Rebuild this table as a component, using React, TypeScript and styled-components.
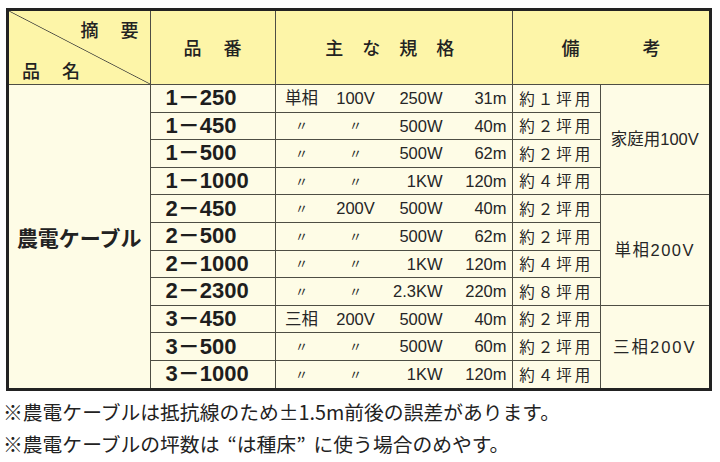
import React from "react";
import styled, { createGlobalStyle } from "styled-components";

const GlobalStyle = createGlobalStyle`
  html, body {
    margin: 0;
    padding: 0;
    background: #ffffff;
  }
  body {
    font-family: "Liberation Sans", "Noto Sans CJK JP", sans-serif;
    color: #262626;
  }
`;

const Page = styled.div`
  width: 720px;
  height: 462px;
  overflow: hidden;
`;

const Frame = styled.div`
  margin: 8px 0 0 6px;
  width: 706px;
  box-sizing: border-box;
  border: 3px solid #222;
`;

const Table = styled.table`
  width: 100%;
  border-collapse: collapse;
  border-style: hidden;
  table-layout: fixed;
`;

const HeadRow = styled.tr`
  height: 73px;
  background: #fdf5a8;
`;

const BodyRow = styled.tr`
  height: 27.6px;
  background: #fefce6;
`;

const Th = styled.th`
  border: 1px solid #4e4e44;
  padding: 0;
  font-family: "Noto Sans CJK JP", sans-serif;
  font-weight: 500;
  font-size: 18px;
  color: #222;
  text-align: center;
  vertical-align: middle;
`;

const CornerTh = styled(Th)`
  background: linear-gradient(
    to top right,
    transparent calc(50% - 0.8px),
    #4e4e44 50%,
    transparent calc(50% + 0.8px)
  );
`;

const Corner = styled.div`
  height: 73px;
  box-sizing: border-box;
  padding: 7px 11px 2px 13px;
  display: flex;
  flex-direction: column;
  justify-content: space-between;
`;

const Spread = styled.span<{ $gap: number; $align?: string }>`
  display: flex;
  justify-content: ${(p) => p.$align || "center"};
  gap: ${(p) => p.$gap}px;
  line-height: 1.3;
`;

const Td = styled.td`
  border: 1px solid #4e4e44;
  padding: 0;
  vertical-align: middle;
`;

const NameTd = styled(Td)`
  font-family: "Noto Sans CJK JP", sans-serif;
  font-weight: 700;
  font-size: 21px;
  text-align: center;
  color: #222;
`;

const CodeTd = styled(Td)`
  padding-left: 15px;
  font-family: "Liberation Sans", "Noto Sans CJK JP", sans-serif;
  font-weight: 700;
  font-size: 22px;
  line-height: 1;
  color: #1e1e1e;
`;

const Spec = styled.div`
  display: grid;
  grid-template-columns: 52px 56px 59px 64px;
  padding-right: 5px;
  align-items: center;
  font-family: "Liberation Sans", "Noto Sans CJK JP", sans-serif;
  font-size: 16.5px;
  line-height: 1;
`;

const SpecCell = styled.span<{ $right?: boolean; $small?: boolean }>`
  text-align: ${(p) => (p.$right ? "right" : "center")};
  font-size: ${(p) => (p.$small ? "13px" : "inherit")};
  white-space: nowrap;
`;

const NoteTd = styled(Td)`
  text-align: center;
  font-family: "Noto Sans CJK JP", sans-serif;
  font-size: 15.5px;
  letter-spacing: 3px;
  line-height: 1;
`;

const RemarkTd = styled(Td)<{ $spacing: number }>`
  text-align: center;
  font-family: "Liberation Sans", "Noto Sans CJK JP", sans-serif;
  font-size: 16.5px;
  letter-spacing: ${(p) => p.$spacing}px;
  line-height: 1;
`;

const Notes = styled.div`
  padding: 5px 0 0 3px;
  font-family: "Noto Sans CJK JP", sans-serif;
  font-size: 19.8px;
  line-height: 32px;
  color: #222;
  white-space: nowrap;
`;

const Quote = styled.span`
  margin: 0 8px;
`;

type Row = {
  code: string;
  phase: string;
  volt: string;
  watt: string;
  len: string;
  note: string;
};

const rows: Row[] = [
  { code: "1－250", phase: "単相", volt: "100V", watt: "250W", len: "31m", note: "約１坪用" },
  { code: "1－450", phase: "〃", volt: "〃", watt: "500W", len: "40m", note: "約２坪用" },
  { code: "1－500", phase: "〃", volt: "〃", watt: "500W", len: "62m", note: "約２坪用" },
  { code: "1－1000", phase: "〃", volt: "〃", watt: "1KW", len: "120m", note: "約４坪用" },
  { code: "2－450", phase: "〃", volt: "200V", watt: "500W", len: "40m", note: "約２坪用" },
  { code: "2－500", phase: "〃", volt: "〃", watt: "500W", len: "62m", note: "約２坪用" },
  { code: "2－1000", phase: "〃", volt: "〃", watt: "1KW", len: "120m", note: "約４坪用" },
  { code: "2－2300", phase: "〃", volt: "〃", watt: "2.3KW", len: "220m", note: "約８坪用" },
  { code: "3－450", phase: "三相", volt: "200V", watt: "500W", len: "40m", note: "約２坪用" },
  { code: "3－500", phase: "〃", volt: "〃", watt: "500W", len: "60m", note: "約２坪用" },
  { code: "3－1000", phase: "〃", volt: "〃", watt: "1KW", len: "120m", note: "約４坪用" },
];

const remarks: Record<number, { text: string; span: number; spacing: number }> = {
  0: { text: "家庭用100V", span: 4, spacing: 0 },
  4: { text: "単相200V", span: 4, spacing: 1.5 },
  8: { text: "三相200V", span: 3, spacing: 2 },
};

const isDitto = (s: string) => s === "〃";

export default function App() {
  return (
    <Page>
      <GlobalStyle />
      <Frame>
        <Table>
          <colgroup>
            <col style={{ width: 141 }} />
            <col style={{ width: 125 }} />
            <col style={{ width: 237.5 }} />
            <col style={{ width: 87.5 }} />
            <col style={{ width: 109 }} />
          </colgroup>
          <thead>
            <HeadRow>
              <CornerTh>
                <Corner>
                  <Spread $gap={22} $align="flex-end">
                    <span>摘</span>
                    <span>要</span>
                  </Spread>
                  <Spread $gap={22} $align="flex-start">
                    <span>品</span>
                    <span>名</span>
                  </Spread>
                </Corner>
              </CornerTh>
              <Th>
                <Spread $gap={22}>
                  <span>品</span>
                  <span>番</span>
                </Spread>
              </Th>
              <Th style={{ paddingRight: 8 }}>
                <Spread $gap={19}>
                  <span>主</span>
                  <span>な</span>
                  <span>規</span>
                  <span>格</span>
                </Spread>
              </Th>
              <Th colSpan={2}>
                <Spread $gap={63}>
                  <span>備</span>
                  <span>考</span>
                </Spread>
              </Th>
            </HeadRow>
          </thead>
          <tbody>
            {rows.map((r, i) => (
              <BodyRow key={r.code}>
                {i === 0 && <NameTd rowSpan={rows.length}>農電ケーブル</NameTd>}
                <CodeTd>{r.code}</CodeTd>
                <Td>
                  <Spec>
                    <SpecCell $small={isDitto(r.phase)}>{r.phase}</SpecCell>
                    <SpecCell $small={isDitto(r.volt)}>{r.volt}</SpecCell>
                    <SpecCell $right>{r.watt}</SpecCell>
                    <SpecCell $right>{r.len}</SpecCell>
                  </Spec>
                </Td>
                <NoteTd>{r.note}</NoteTd>
                {remarks[i] && (
                  <RemarkTd rowSpan={remarks[i].span} $spacing={remarks[i].spacing}>
                    {remarks[i].text}
                  </RemarkTd>
                )}
              </BodyRow>
            ))}
          </tbody>
        </Table>
      </Frame>
      <Notes>
        <div>※農電ケーブルは抵抗線のため±1.5m前後の誤差があります。</div>
        <div>
          ※農電ケーブルの坪数は<Quote>“は種床”</Quote>に使う場合のめやす。
        </div>
      </Notes>
    </Page>
  );
}
